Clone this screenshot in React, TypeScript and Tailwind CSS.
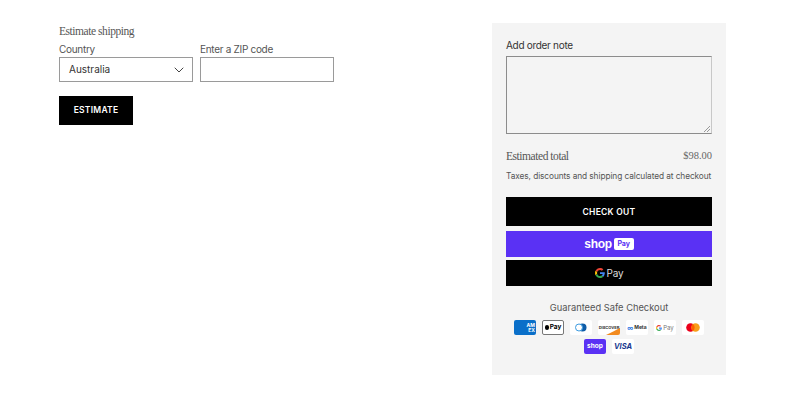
import React from "react";
import { ChevronDown } from "lucide-react";

const sans = "font-['Inter',Arial,sans-serif]";
const arial = "font-['Liberation_Sans',Arial,sans-serif]";
const serif = "font-['Liberation_Serif','Times_New_Roman',serif]";

// bg is passed separately, a bg-white next to it would win in the stylesheet order
const Card = ({ children, className = "bg-white" }: { children?: React.ReactNode; className?: string }) => (
  <div className={"w-[22px] h-[15px] rounded-[2px] flex items-center justify-center overflow-hidden " + className}>
    {children}
  </div>
);

const GoogleG = ({ size }: { size: number }) => (
  <svg width={size} height={size} viewBox="0 0 48 48">
    <path fill="#EA4335" d="M24 9.5c3.5 0 6.7 1.2 9.2 3.6l6.9-6.9C35.900 2.400 30.400 0 24 0 14.600 0 6.500 5.400 2.600 13.200l8 6.200C12.500 13.700 17.800 9.500 24 9.500z" />
    <path fill="#4285F4" d="M47 24.500c0-1.600-.1-3.100-.4-4.500H24v9h13c-.6 3-2.200 5.500-4.800 7.200l7.700 6C44.400 38 47 31.800 47 24.500z" />
    <path fill="#FBBC05" d="M10.600 28.600c-.5-1.400-.8-3-.8-4.600s.3-3.200.8-4.600l-8-6.200C.9 16.500 0 20.100 0 24s.9 7.500 2.600 10.800l8-6.200z" />
    <path fill="#34A853" d="M24 48c6.500 0 11.900-2.100 15.900-5.800l-7.700-6c-2.100 1.400-4.900 2.300-8.200 2.300-6.200 0-11.500-4.200-13.400-9.900l-8 6.200C6.500 42.600 14.600 48 24 48z" />
  </svg>
);

export default function App() {
  return (
    <div className={"w-[801px] h-[401px] bg-white flex justify-between pl-[59px] pr-[75px] pt-[23px] overflow-hidden " + sans}>
      <div className="w-[275px] pt-[1px]">
        <h2 className={"text-[11.500px] leading-[14px] tracking-[-0.45px] text-[#555] " + serif}>Estimate shipping</h2>
        <div className="flex gap-[7px] mt-[4px]">
          <div className="w-[134px]">
            <label className="block text-[10px] leading-[14px] tracking-[-0.3px] text-[#555]">Country</label>
            <div className="mt-[1px] h-[25px] border border-[#9a9a9a] flex items-center justify-between pl-[9px] pr-[5px]">
              <span className="text-[10px] text-[#333]">Australia</span>
              <ChevronDown size={16} strokeWidth={1.5} className="text-[#444]" />
            </div>
          </div>
          <div className="w-[134px]">
            <label className="block text-[10px] leading-[14px] tracking-[-0.3px] text-[#555]">Enter a ZIP code</label>
            <div className="mt-[1px] h-[25px] border border-[#9a9a9a]" />
          </div>
        </div>
        <button className="mt-[14px] w-[74px] h-[29px] bg-black text-white text-[8.500px] font-semibold tracking-[0.03em] block">ESTIMATE</button>
      </div>

      <div className="w-[234px] h-[352px] bg-[#f4f4f4] px-[14px] pt-[15px]">
        <label className="block text-[10px] leading-[14px] tracking-[-0.3px] text-[#333]">Add order note</label>
        <div className="relative mt-[4px] h-[78px] border border-[#8c8c8c] border-r-[#c8c8c8]">
          <svg className="absolute right-0 bottom-0" width="8" height="8" viewBox="0 0 8 8">
            <path d="M7 1 1 7M7 4 4 7" stroke="#999" strokeWidth="1" fill="none" />
          </svg>
        </div>
        <div className="flex justify-between items-center mt-[15px]">
          <span className={"text-[11.500px] leading-[14px] tracking-[-0.45px] text-[#555] " + serif}>Estimated total</span>
          <span className={"text-[10.500px] leading-[14px] text-[#666] " + serif}>$98.00</span>
        </div>
        <p className="mt-[6px] text-[8.300px] leading-[14px] tracking-[-0.08px] text-[#555] whitespace-nowrap">
          Taxes, discounts and shipping calculated at checkout
        </p>
        <button className="mt-[14px] w-full h-[29px] pt-[1px] bg-black text-white text-[8.500px] font-semibold tracking-[0.03em] block">CHECK OUT</button>
        <div className="mt-[5px] h-[26px] bg-[#5a31f4] flex items-center justify-center gap-[2px]">
          <span className={"text-white text-[12px] font-bold leading-none tracking-[-0.3px] " + arial}>shop</span>
          <span className="w-[20px] h-[12px] rounded-[2px] bg-white text-[#5a31f4] text-[7px] leading-[12px] font-bold text-center">Pay</span>
        </div>
        <div className="mt-[3px] h-[26px] bg-black flex items-center justify-center gap-[2px]">
          <GoogleG size={10} />
          <span className="text-[#ddd] text-[10px] leading-none tracking-[-0.2px]">Pay</span>
        </div>
        <p className="mt-[15px] text-center text-[9.300px] leading-[14px] text-[#555]">Guaranteed Safe Checkout</p>
        <div className="mt-[5px] flex justify-center gap-[6px]">
          <Card className="bg-[#0a6fc9]">
            <span className="text-white text-[5px] leading-[5px] font-bold text-right w-full pr-[1px]">AM<br />EX</span>
          </Card>
          <Card className="bg-white border border-[#777] gap-[1px]">
            <span className="w-[4px] h-[5px] rounded-full bg-black" />
            <span className="text-[6.500px] font-bold text-black">Pay</span>
          </Card>
          <Card>
            <svg width="12" height="9" viewBox="0 0 12 9">
              <circle cx="7.500" cy="4.500" r="4" fill="#0f5da8" />
              <circle cx="4" cy="4.500" r="3.500" fill="#fff" stroke="#3d9be0" strokeWidth="1" />
            </svg>
          </Card>
          <Card className="bg-white relative">
            <span className="text-[4px] font-bold text-[#333] leading-none z-10">DISCOVER</span>
            <svg className="absolute right-0 bottom-0" width="22" height="15" viewBox="0 0 22 15">
              <path d="M8 15C14 12 18 10 22 8v7z" fill="#f28a1e" />
            </svg>
          </Card>
          <Card className="bg-white gap-[1px]">
            <span className="text-[#1d6fe0] text-[6px] font-bold">∞</span>
            <span className="text-[5px] font-bold text-[#333]">Meta</span>
          </Card>
          <Card className="bg-white gap-[1px]">
            <GoogleG size={6} />
            <span className="text-[6px] text-[#777]">Pay</span>
          </Card>
          <Card>
            <svg width="14" height="9" viewBox="0 0 14 9">
              <circle cx="4.500" cy="4.500" r="4.300" fill="#eb001b" />
              <circle cx="9.500" cy="4.500" r="4.300" fill="#f79e1b" />
              <path d="M7 1.100a4.300 4.300 0 0 1 0 6.800 4.300 4.300 0 0 1 0-6.800z" fill="#ff5f00" />
            </svg>
          </Card>
        </div>
        <div className="mt-[4px] flex justify-center gap-[6px]">
          <Card className="bg-[#5a31f4]">
            <span className="text-white text-[6.500px] font-bold">shop</span>
          </Card>
          <Card>
            <span className="text-[#1a3a8f] text-[7.500px] font-bold italic">VISA</span>
          </Card>
        </div>
      </div>
    </div>
  );
}
